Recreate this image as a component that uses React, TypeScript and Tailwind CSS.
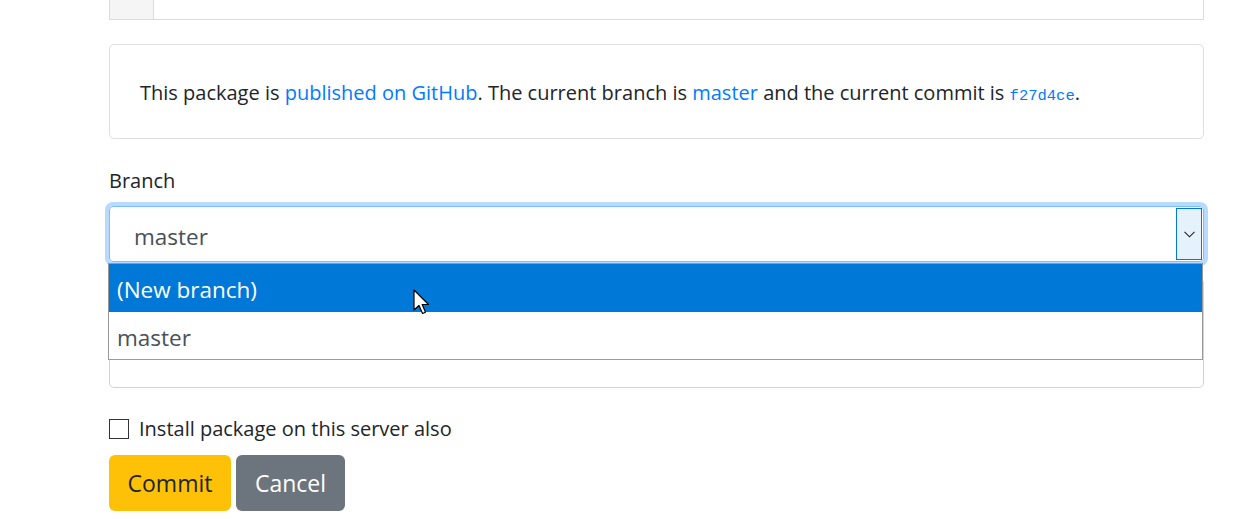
import React from 'react';

const Cursor = () => (
  <svg width="20" height="28" viewBox="0 0 20 28" className="absolute z-20 left-[413px] top-[289px]">
    <path d="M1 1 L1 21 L6 16.5 L9.5 24.5 L12.5 23.2 L9.2 15.5 L15.5 15.5 Z" fill="#fff" stroke="#000" strokeWidth="1.2" strokeLinejoin="round" />
  </svg>
);

const App = () => {
  return (
    <div className="relative w-[1254px] h-[519px] overflow-hidden bg-white text-[#212529]" style={{ fontFamily: '"Open Sans", "Noto Sans", sans-serif' }}>
      <div className="ml-[109px] w-[1095px] flex flex-col">
        {/* editor tail */}
        <div className="h-[20px] flex border-x border-b border-[#dcdcdc]">
          <div className="w-[44px] bg-[#f5f5f5] border-r border-[#dcdcdc]" />
          <div className="flex-1" />
        </div>

        <div className="mt-[24px] h-[95px] border border-[#dfdfdf] rounded-[5px] flex items-center pl-[30px] pt-[4px] text-[20px]">
          <p>
            This package is <a className="text-[#007bff]">published on GitHub</a>. The current branch is{' '}
            <a className="text-[#007bff]">master</a> and the current commit is{' '}
            <a className="text-[#007bff]"><code className="text-[15.5px]" style={{ fontFamily: '"Liberation Mono", monospace' }}>f27d4ce</code></a>.
          </p>
        </div>

        <label className="mt-[27px] text-[20px] leading-[30px]">Branch</label>

        <div className="relative mt-[10px]">
          <div className="h-[56px] border border-[#80bdff] rounded-[4px] ring-4 ring-[#b8dafe] flex items-center">
            <span className="flex-1 pl-[24px] pt-[6px] text-[22.5px] text-[#495057]">master</span>
            <div className="w-[26px] self-stretch my-[1px] mr-[1px] bg-[#e5f1fb] border border-[#0078d7] flex items-center justify-center">
              <svg width="11" height="7" viewBox="0 0 11 7">
                <path d="M0.5 0.8 L5.5 5.8 L10.5 0.8" fill="none" stroke="#222" strokeWidth="1.1" />
              </svg>
            </div>
          </div>

          <ul className="absolute left-[-1px] top-[57px] w-[1095px] z-10 bg-white border border-[#999] text-[22.5px] list-none">
            <li className="h-[48px] bg-[#0078d7] text-white flex items-center pl-[8px] pt-[4px]">(New branch)</li>
            <li className="h-[47px] text-[#495057] flex items-center pl-[8px] pt-[4px]">master</li>
          </ul>
        </div>

        <div className="mt-[16px] h-[110px] border border-[#ced4da] rounded-[5px]" />

        <div className="mt-[26px] flex items-center gap-[10px] text-[20px]">
          <span className="w-[20px] h-[20px] border border-[#333] bg-white" />
          <span>Install package on this server also</span>
        </div>

        <div className="mt-[11px] flex gap-[5px]">
          <button className="h-[56px] w-[122px] rounded-[6px] bg-[#ffc107] text-[#212529] text-[23px]">Commit</button>
          <button className="h-[56px] w-[109px] rounded-[6px] bg-[#6c757d] text-white text-[23px]">Cancel</button>
        </div>
      </div>
      <Cursor />
    </div>
  );
};

export default App;
